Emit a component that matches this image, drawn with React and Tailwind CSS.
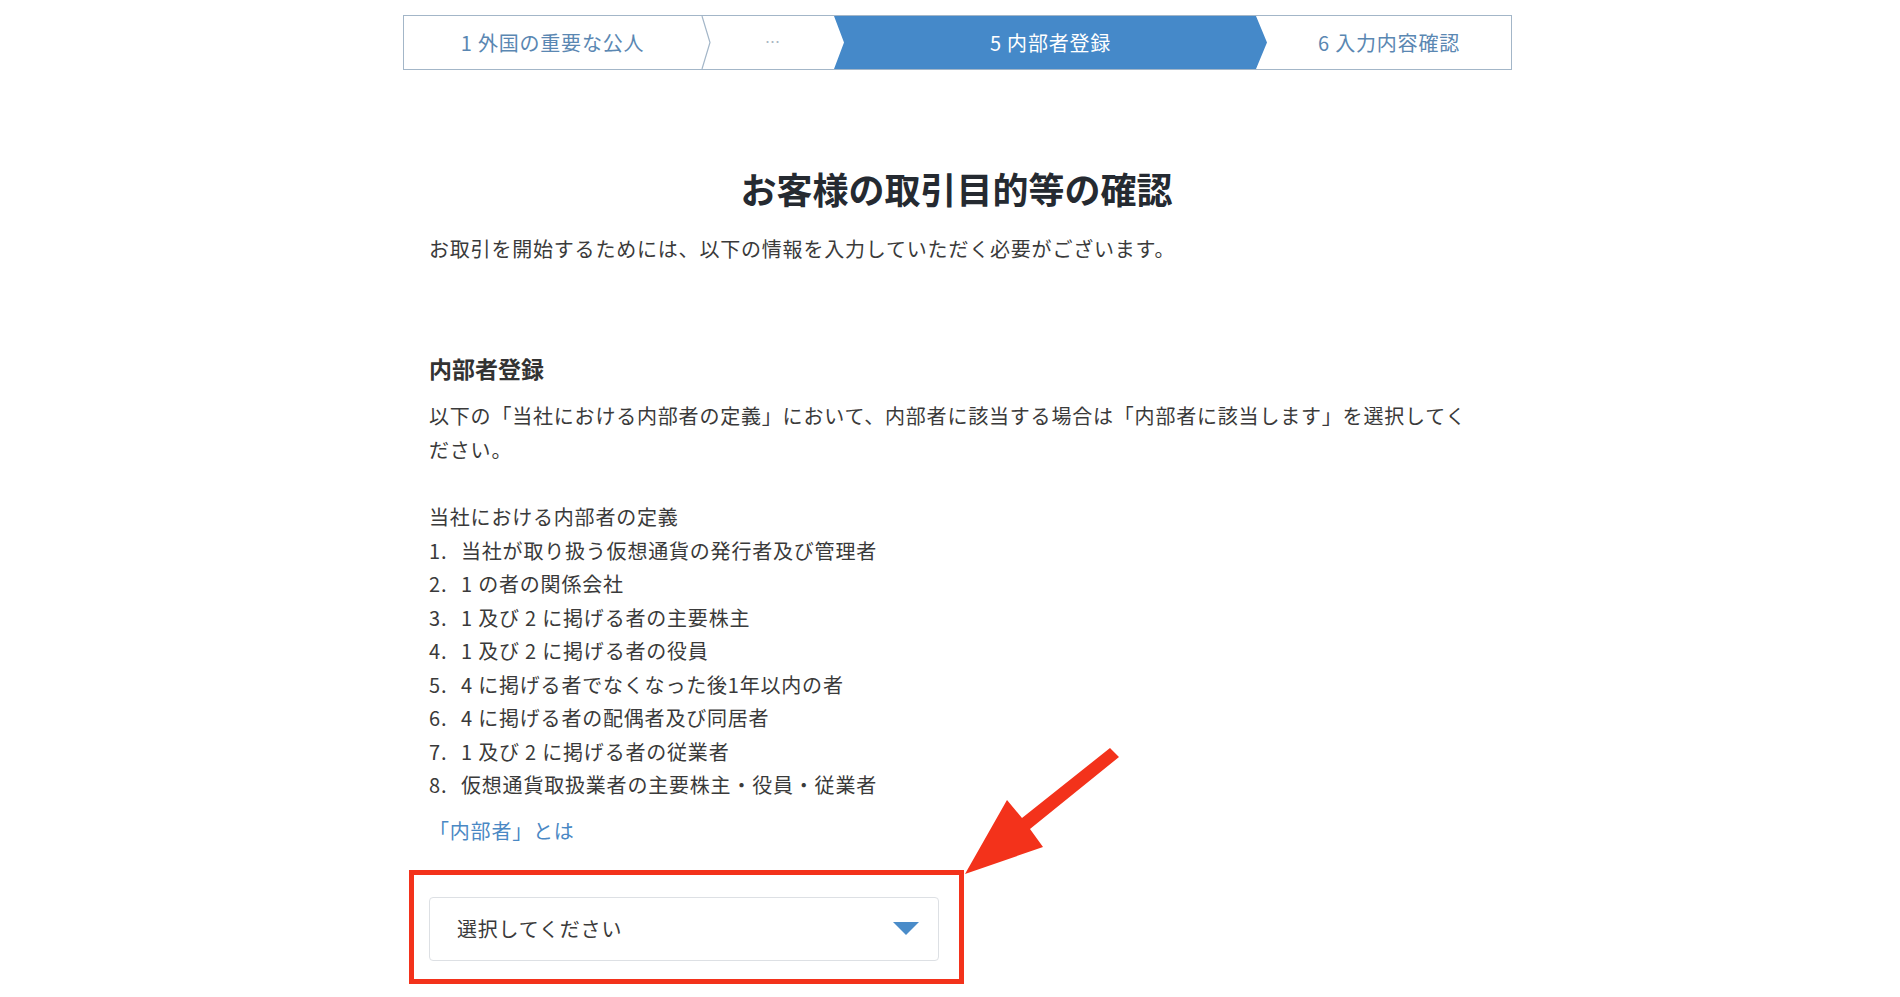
const steps = [
  "当社が取り扱う仮想通貨の発行者及び管理者",
  "1 の者の関係会社",
  "1 及び 2 に掲げる者の主要株主",
  "1 及び 2 に掲げる者の役員",
  "4 に掲げる者でなくなった後1年以内の者",
  "4 に掲げる者の配偶者及び同居者",
  "1 及び 2 に掲げる者の従業者",
  "仮想通貨取扱業者の主要株主・役員・従業者",
];

const Stepper = () => (
  <div className="flex h-[55px] w-[1109px] border border-[#a3b6c8] text-[20px] tracking-[0.04em]">
    <div className="flex w-[297px] shrink-0 items-center justify-center text-[#5a87b2]">
      1 外国の重要な公人
    </div>
    <svg width="10" height="53" className="shrink-0">
      <polyline points="1,0 9,26.5 1,53" stroke="#a3b6c8" strokeWidth="1.2" fill="none" />
    </svg>
    <div className="flex w-[123px] shrink-0 items-center justify-center text-[15px] tracking-normal text-[#aab6c2]">
      …
    </div>
    <div className="flex w-[433px] shrink-0 items-center justify-center bg-[#4589c9] text-white [clip-path:polygon(0_0,calc(100%-11px)_0,100%_50%,calc(100%-11px)_100%,0_100%,10px_50%)]">
      5 内部者登録
    </div>
    <div className="flex flex-1 items-center justify-center text-[#5a87b2]">
      6 入力内容確認
    </div>
  </div>
);

export default function App() {
  return (
    <div className="relative h-[997px] w-[1900px] overflow-hidden bg-white font-['Noto_Sans_CJK_JP','Noto_Sans',sans-serif] text-[#3a3a3a]">
      <div className="ml-[403px] w-[1109px] pt-[15px]">
        <Stepper />

        <div className="pl-[26px] pr-[28px]">
          {/* Page title */}
          <h1 className="mt-[94px] text-center text-[36px] font-bold leading-[48px] text-[#252a31]">
            お客様の取引目的等の確認
          </h1>
          <p className="mt-[20px] text-[20px] leading-[34px] tracking-[0.04em]">
            お取引を開始するためには、以下の情報を入力していただく必要がございます。
          </p>

          {/* Insider registration */}
          <h2 className="mt-[85px] text-[23px] font-bold leading-[34px] text-[#333]">
            内部者登録
          </h2>
          <p className="mt-[14px] text-[20px] leading-[34px] tracking-[0.04em]">
            以下の「当社における内部者の定義」において、内部者に該当する場合は「内部者に該当します」を選択してく
            <br />
            ださい。
          </p>

          <div className="mt-[33px] text-[20px] leading-[33.5px] tracking-[0.04em]">
            <div>当社における内部者の定義</div>
            {steps.map((s, i) => (
              <div key={i} className="flex">
                <span className="w-[32px] shrink-0">{i + 1}.</span>
                <span>{s}</span>
              </div>
            ))}
          </div>

          <div className="mt-[12px] text-[20px] leading-[34px] tracking-[0.04em] text-[#4a88c4]">
            「内部者」とは
          </div>

          {/* Select, highlighted */}
          <div className="-ml-[20px] mt-[22px] w-[555px] border-[5px] border-[#f3321b] pb-[18px] pl-[15px] pr-[20px] pt-[22px]">
            <div className="flex h-[64px] items-center justify-between rounded-[4px] border border-[#dde0e4] pl-[27px] pr-[19px] text-[20px] tracking-[0.04em] text-[#3a3a3a]">
              <span>選択してください</span>
              <svg width="26" height="13" viewBox="0 0 26 13">
                <polygon points="0,0 26,0 13,13" fill="#4a8cc9" />
              </svg>
            </div>
          </div>
        </div>
      </div>

      {/* Annotation arrow */}
      <svg className="pointer-events-none absolute left-0 top-0" width="1900" height="997">
        <polygon
          points="965,874 1007,800 1022,818 1110,748 1119,757 1030,829 1043,847"
          fill="#f3321b"
        />
      </svg>
    </div>
  );
}
